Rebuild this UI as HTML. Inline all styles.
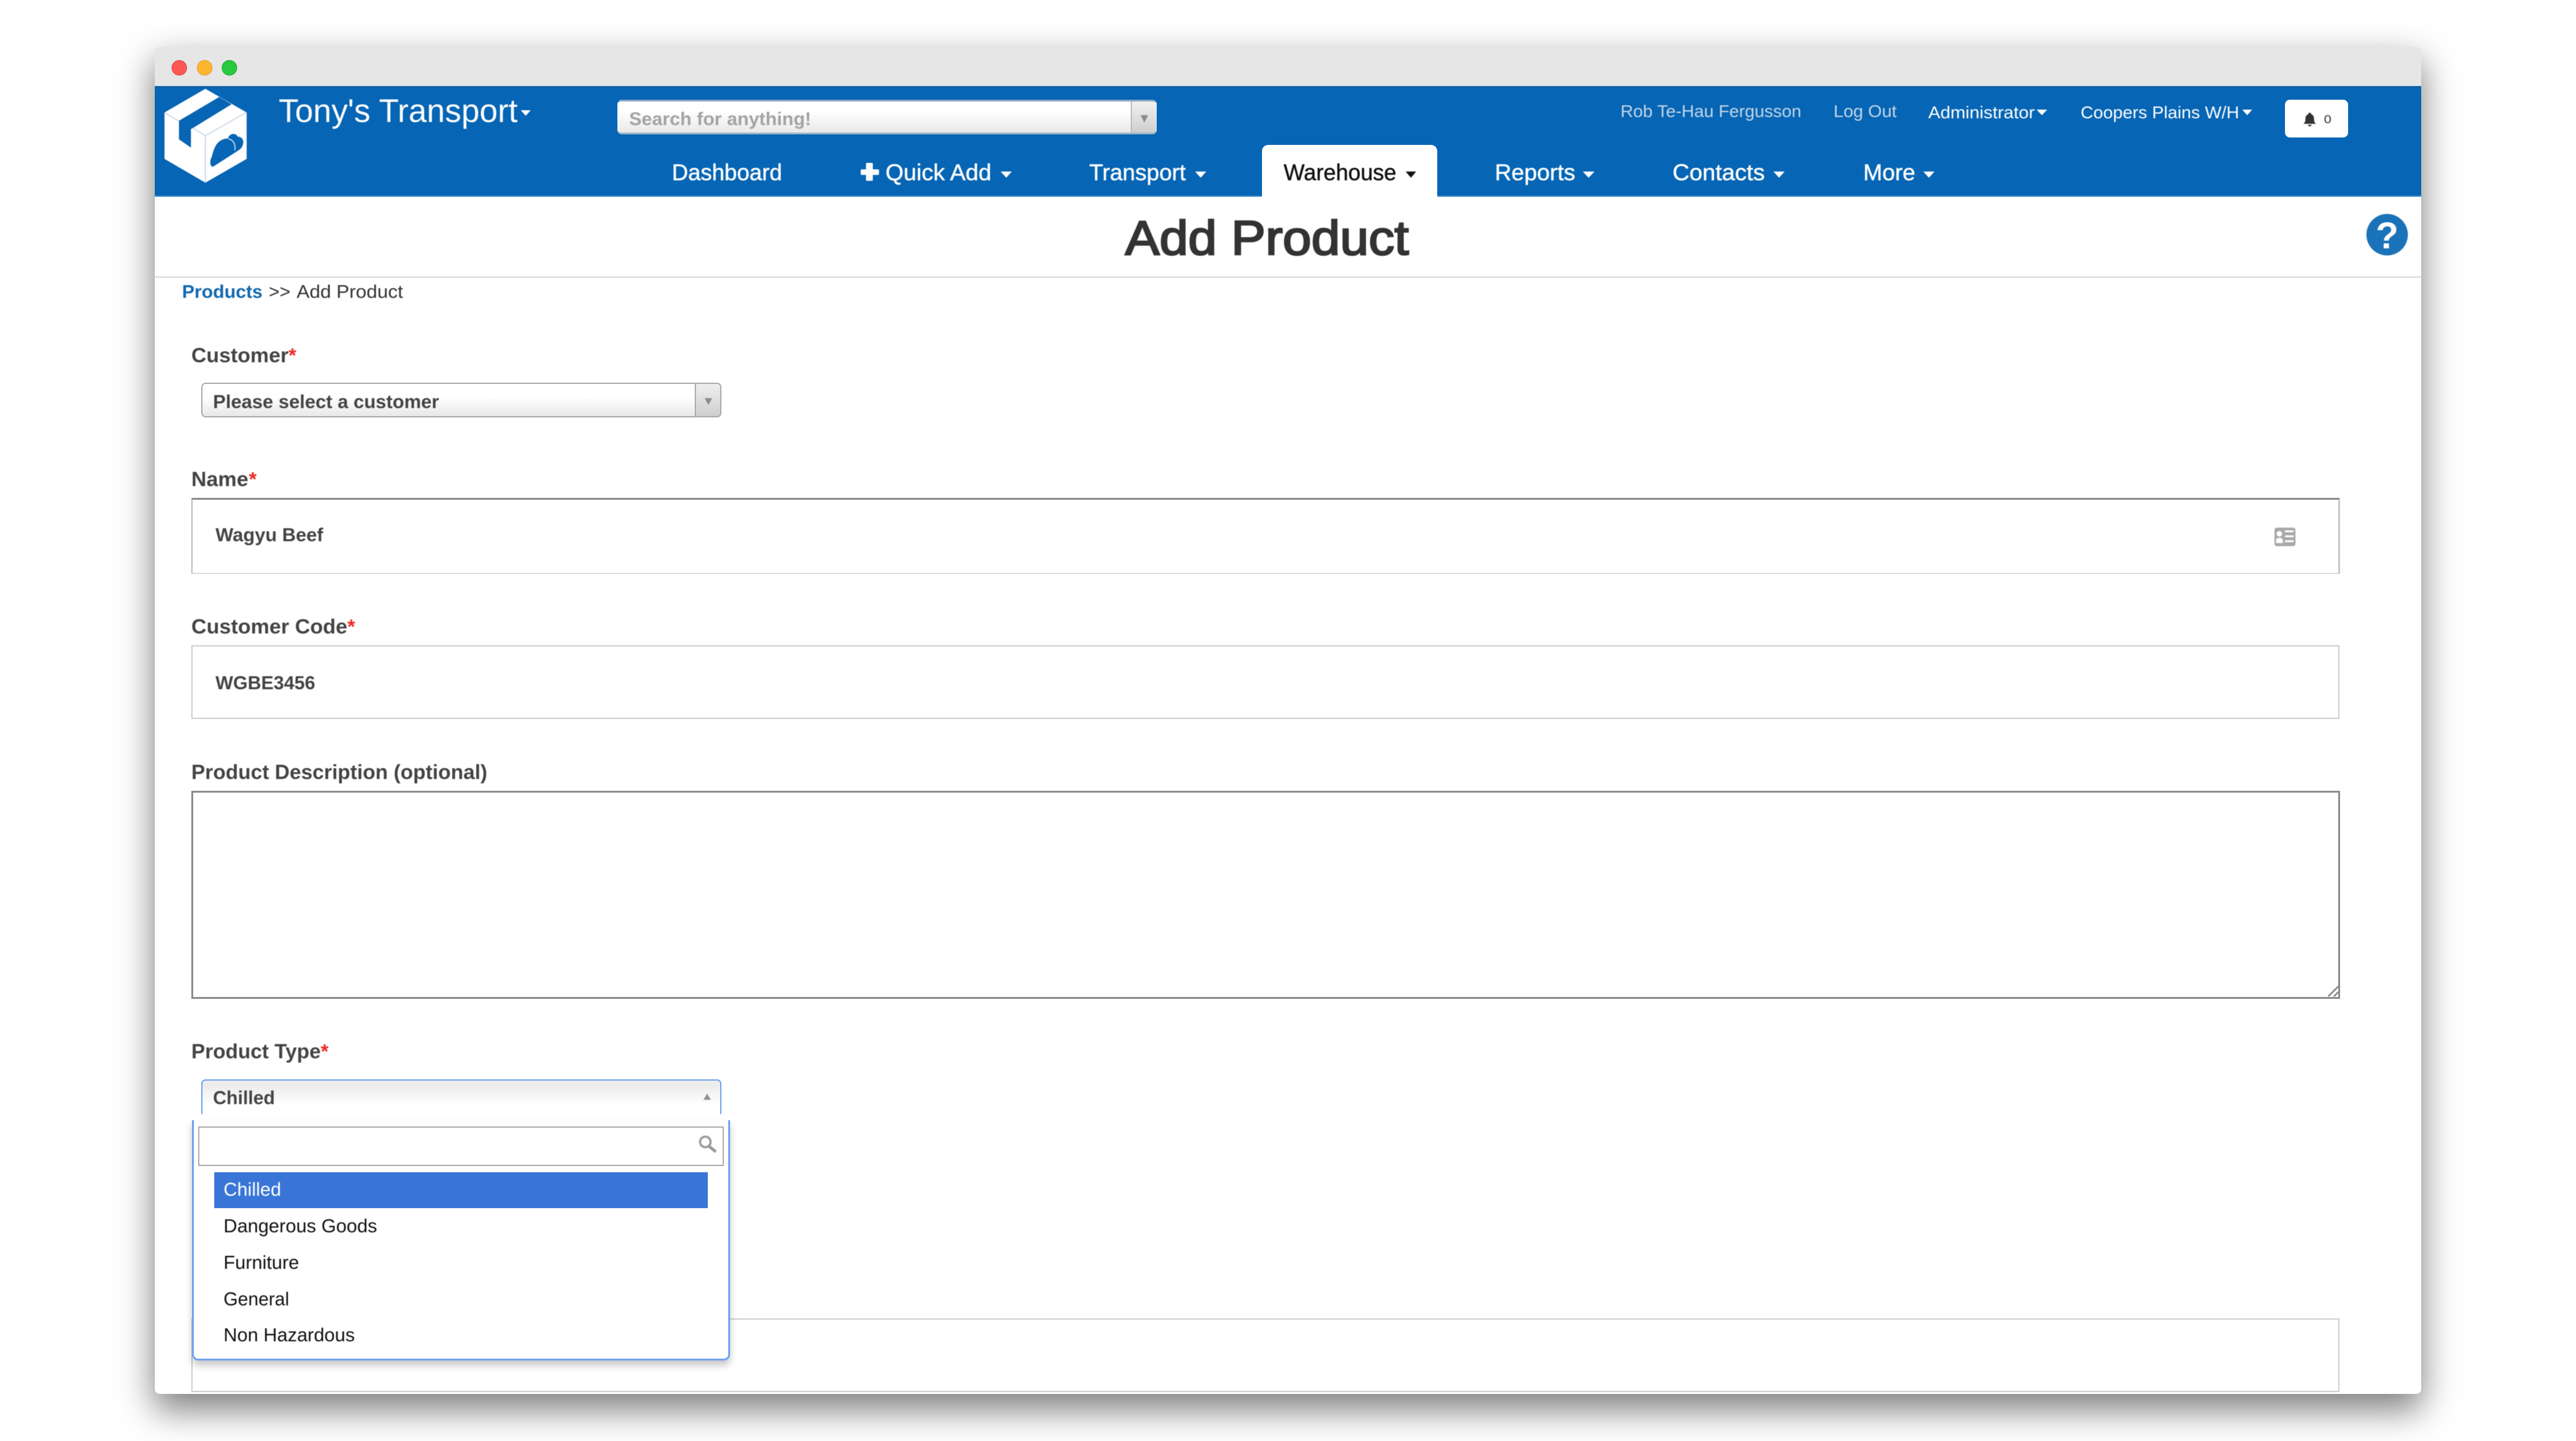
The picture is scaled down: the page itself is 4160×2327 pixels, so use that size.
<!DOCTYPE html>
<html lang="en">
<head>
<meta charset="utf-8">
<title>Add Product</title>
<style>
html,body{margin:0;padding:0;width:4160px;height:2327px;overflow:hidden;background:#fff;}
.a{position:absolute;box-sizing:border-box;}
#win{left:250px;top:75px;width:3660px;height:2176px;background:#fff;border-radius:10px 10px 8px 8px;box-shadow:0 24px 56px 2px rgba(0,0,0,.5);}
#bar{left:250px;top:75px;width:3660px;height:64px;background:#e6e6e6;border-radius:10px 10px 0 0;border-bottom:2px solid #d6e6f2;}
#hdr{left:250px;top:139px;width:3660px;height:179px;background:#0665b4;border-top:2px solid #1a5c98;border-bottom:2px solid #5b9ccf;}
.dot{width:25px;height:25px;border-radius:50%;top:97px;}
#tab{left:2038px;top:234px;width:283px;height:85px;background:#fff;border-radius:10px 10px 0 0;}
#search{left:997px;top:161px;width:871px;height:56px;border-radius:7px;background:linear-gradient(#fff 30%,#e9e9e9);border-top:3px solid #8fa9c4;border-bottom:3px solid #9fb6cc;}
#search i{position:absolute;right:0;top:0;bottom:0;width:40px;background:linear-gradient(#f1f1f1,#cfcfcf);border-left:2px solid #bbb;border-radius:0 7px 7px 0;}
#bell{left:3690px;top:161px;width:102px;height:61px;background:#fff;border-radius:8px;}
#rule{left:250px;top:446px;width:3660px;height:3px;background:#e2e2e2;}
.sel{left:325px;width:840px;height:56px;border:2px solid #aaa;border-radius:7px;background:linear-gradient(#fff 40%,#e8e8e8);}
.sel i{position:absolute;right:0;top:0;bottom:0;width:39px;background:linear-gradient(#eee,#cfcfcf);border-left:2px solid #aaa;border-radius:0 5px 5px 0;}
.inp{left:309px;width:3469px;background:#fff;border:2px solid #cfcfcf;}
#sel2{left:325px;top:1743px;width:840px;height:56px;border:2px solid #6fa3ef;border-bottom:none;border-radius:7px 7px 0 0;background:linear-gradient(#ececec 15%,#fff 75%);}
#panel{left:310px;top:1809px;width:869px;height:388px;background:#fff;border:solid #6fa3ef;border-width:0 3px 3px 3px;border-radius:0 0 10px 10px;box-shadow:0 8px 12px rgba(0,0,0,.22);}
#psearch{left:320px;top:1819px;width:849px;height:64px;border:2px solid #ababab;background:#fff;}
#hl{left:346px;top:1893px;width:797px;height:58px;background:#3875d7;}
svg{position:absolute;left:0;top:0;filter:blur(.6px);}
text{font-family:"Liberation Sans",Arial,sans-serif;}
</style>
</head>
<body>
<div class="a" id="win"></div>
<div class="a" id="bar"></div>
<div class="a dot" style="left:277px;background:#fc5753;border:1px solid #df4744;"></div>
<div class="a dot" style="left:318px;background:#fdb52f;border:1px solid #e09e2b;"></div>
<div class="a dot" style="left:358px;background:#28c83f;border:1px solid #1fab33;"></div>
<div class="a" id="hdr"></div>
<div class="a" id="tab"></div>
<div class="a" id="search"><i></i></div>
<div class="a" id="bell"></div>
<div class="a" id="rule"></div>

<div class="a sel" style="top:618px;"><i></i></div>
<div class="a inp" style="top:804px;height:123px;border-top:3px solid #8a8a8a;border-right:3px solid #c9c9c9;border-bottom:2px solid #dcdcdc;border-left:2px solid #bbb;width:3470px;"></div>
<div class="a inp" style="top:1042px;height:119px;"></div>
<div class="a inp" style="top:1277px;height:336px;width:3470px;border:3px solid #8c8c8c;"></div>
<div class="a inp" style="top:2129px;height:119px;"></div>
<div class="a" id="sel2"></div>
<div class="a" id="panel"></div>
<div class="a" id="psearch"></div>
<div class="a" id="hl"></div>

<svg width="4160" height="2327" viewBox="0 0 4160 2327" xmlns="http://www.w3.org/2000/svg">
  <!-- logo -->
  <g transform="translate(220 60) scale(.33333)">
    <polygon fill="#fff" points="137,365 335,250 535,365 535,590 335,705 137,590"/>
    <polygon fill="#0665b4" points="402,290 462,325 275,440 265,445 265,535 207,495 207,405"/>
    <path d="M137 365L207 407M275 440L335 478L532 365M335 478V705" fill="none" stroke="#c3d4e6" stroke-width="5"/>
    <path d="M368 628C356 622 356 596 366 580C372 560 378 520 410 500C425 492 435 492 445 490C448 470 480 458 492 482C515 482 525 505 515 525C512 538 500 545 490 552L375 626Z" fill="#0665b4"/>
    <path d="M445 492C470 498 482 515 478 548" fill="none" stroke="#fff" stroke-width="4"/>
  </g>

  <!-- header text -->
  <text x="450" y="197" font-size="53" fill="#fff" textLength="386" lengthAdjust="spacingAndGlyphs">Tony's Transport</text>
  <polygon points="841,178 857,178 849,187" fill="#fff"/>
  <text x="1016" y="202" font-size="30" font-weight="bold" fill="#a3a3a3" textLength="294" lengthAdjust="spacingAndGlyphs">Search for anything!</text>
  <polygon points="1842,186 1854,186 1848,198" fill="#8a8a8a"/>

  <text x="2617" y="189" font-size="28" fill="#c4d6e8" textLength="292" lengthAdjust="spacingAndGlyphs">Rob Te-Hau Fergusson</text>
  <text x="2961" y="189" font-size="28" fill="#c4d6e8" textLength="102" lengthAdjust="spacingAndGlyphs">Log Out</text>
  <text x="3114" y="191" font-size="28" fill="#fff" textLength="172" lengthAdjust="spacingAndGlyphs">Administrator</text>
  <polygon points="3289,177 3306,177 3297.500,186" fill="#fff"/>
  <text x="3360" y="191" font-size="28" fill="#fff" textLength="256" lengthAdjust="spacingAndGlyphs">Coopers Plains W/H</text>
  <polygon points="3621,177 3637,177 3629,186" fill="#fff"/>
  <path d="M3730 182c-1.700 0-2.500 1-2.500 2.500c-3.500 1.200-4.500 4-4.500 8c0 3.500-.8 5.500-3.200 7.500h20.400c-2.400-2-3.200-4-3.200-7.500c0-4-1-6.800-4.500-8c0-1.500-.8-2.500-2.500-2.500zM3727 201.500a3 2.500 0 0 0 6 0z" fill="#333"/>
  <text x="3753" y="199" font-size="18" fill="#333" textLength="12" lengthAdjust="spacingAndGlyphs">0</text>

  <!-- nav -->
  <g stroke-width=".5">
  <text x="1085" y="291" font-size="37" fill="#fff" stroke="#fff" textLength="178" lengthAdjust="spacingAndGlyphs">Dashboard</text>
  <path d="M1400 263h8a1.500 1.500 0 0 1 1.500 1.500v9h8.500a1.500 1.500 0 0 1 1.500 1.500v6a1.500 1.500 0 0 1-1.500 1.500h-8.500v8a1.500 1.500 0 0 1-1.500 1.500h-8a1.500 1.500 0 0 1-1.500-1.500v-8h-7a1.500 1.500 0 0 1-1.500-1.500v-6a1.500 1.500 0 0 1 1.500-1.500h7v-9a1.500 1.500 0 0 1 1.500-1.500z" fill="#fff"/>
  <text x="1430" y="291" font-size="37" fill="#fff" stroke="#fff" textLength="171" lengthAdjust="spacingAndGlyphs">Quick Add</text>
  <polygon points="1616,277 1634,277 1625,287" fill="#fff"/>
  <text x="1759" y="291" font-size="37" fill="#fff" stroke="#fff" textLength="156" lengthAdjust="spacingAndGlyphs">Transport</text>
  <polygon points="1930,277 1948,277 1939,287" fill="#fff"/>
  <text x="2073" y="291" font-size="37" fill="#111" stroke="#111" textLength="182" lengthAdjust="spacingAndGlyphs">Warehouse</text>
  <polygon points="2270,277 2287,277 2278.500,287" fill="#111"/>
  <text x="2414" y="291" font-size="37" fill="#fff" stroke="#fff" textLength="130" lengthAdjust="spacingAndGlyphs">Reports</text>
  <polygon points="2556,277 2575,277 2565.500,287" fill="#fff"/>
  <text x="2701" y="291" font-size="37" fill="#fff" stroke="#fff" textLength="149" lengthAdjust="spacingAndGlyphs">Contacts</text>
  <polygon points="2864,277 2882,277 2873,287" fill="#fff"/>
  <text x="3009" y="291" font-size="37" fill="#fff" stroke="#fff" textLength="84" lengthAdjust="spacingAndGlyphs">More</text>
  <polygon points="3106,277 3124,277 3115,287" fill="#fff"/>
  </g>

  <!-- heading -->
  <text x="1817" y="411" font-size="78" fill="#333" stroke="#333" stroke-width="2.600" textLength="458" lengthAdjust="spacingAndGlyphs">Add Product</text>
  <circle cx="3855" cy="379" r="33.500" fill="#1a72b9"/>
  <text x="3855" y="401" font-size="60" font-weight="bold" fill="#fff" text-anchor="middle">?</text>

  <!-- breadcrumb -->
  <text x="294" y="481" font-size="30" font-weight="bold" fill="#1168b0" textLength="130" lengthAdjust="spacingAndGlyphs">Products</text>
  <text x="434" y="481" font-size="30" fill="#333" textLength="35" lengthAdjust="spacingAndGlyphs">&gt;&gt;</text>
  <text x="479" y="481" font-size="30" fill="#333" textLength="172" lengthAdjust="spacingAndGlyphs">Add Product</text>

  <!-- labels -->
  <g font-size="33" font-weight="bold" fill="#444">
    <text x="309" y="585" textLength="157" lengthAdjust="spacingAndGlyphs">Customer</text>
    <text x="309" y="785" textLength="92" lengthAdjust="spacingAndGlyphs">Name</text>
    <text x="309" y="1023" textLength="252" lengthAdjust="spacingAndGlyphs">Customer Code</text>
    <text x="309" y="1258" textLength="478" lengthAdjust="spacingAndGlyphs">Product Description (optional)</text>
    <text x="309" y="1709" textLength="209" lengthAdjust="spacingAndGlyphs">Product Type</text>
  </g>
  <g font-size="32" font-weight="bold" fill="#ee2a24">
    <text x="466" y="585">*</text>
    <text x="402" y="785">*</text>
    <text x="561" y="1023">*</text>
    <text x="518" y="1709">*</text>
  </g>

  <!-- field text -->
  <g font-size="31" font-weight="bold" fill="#444">
    <text x="344" y="659" textLength="365" lengthAdjust="spacingAndGlyphs">Please select a customer</text>
    <text x="348" y="874" textLength="174" lengthAdjust="spacingAndGlyphs">Wagyu Beef</text>
    <text x="348" y="1113" textLength="161" lengthAdjust="spacingAndGlyphs">WGBE3456</text>
    <text x="344" y="1783" textLength="100" lengthAdjust="spacingAndGlyphs">Chilled</text>
  </g>
  <polygon points="1138,643 1150,643 1144,654" fill="#8a8a8a"/>
  <polygon points="1136,1776 1148,1776 1142,1766" fill="#8f8f8f"/>

  <!-- id card icon -->
  <rect x="3673" y="852" width="34" height="30" rx="4" fill="#a9a9a9"/>
  <circle cx="3681" cy="862" r="4.500" fill="#fff"/>
  <path d="M3675.500 877v-4c0-3 2-4.500 5.500-4.500s5.500 1.500 5.500 4.500v4z" fill="#fff"/>
  <path d="M3690 858h14M3690 866h14M3690 874h14" stroke="#fff" stroke-width="3"/>

  <!-- textarea grip -->
  <path d="M3760 1609L3776 1593M3769 1609L3776 1602" stroke="#666" stroke-width="2" fill="none"/>

  <!-- magnifier -->
  <circle cx="1139" cy="1844" r="8.500" fill="none" stroke="#999" stroke-width="3.500"/>
  <path d="M1145 1851L1156 1860" stroke="#999" stroke-width="5"/>

  <!-- options -->
  <g font-size="30.500">
    <text x="361" y="1931" fill="#fff" textLength="93" lengthAdjust="spacingAndGlyphs">Chilled</text>
    <text x="361" y="1990" fill="#111" textLength="248" lengthAdjust="spacingAndGlyphs">Dangerous Goods</text>
    <text x="361" y="2049" fill="#111" textLength="122" lengthAdjust="spacingAndGlyphs">Furniture</text>
    <text x="361" y="2108" fill="#111" textLength="106" lengthAdjust="spacingAndGlyphs">General</text>
    <text x="361" y="2166" fill="#111" textLength="212" lengthAdjust="spacingAndGlyphs">Non Hazardous</text>
  </g>
</svg>
</body>
</html>
